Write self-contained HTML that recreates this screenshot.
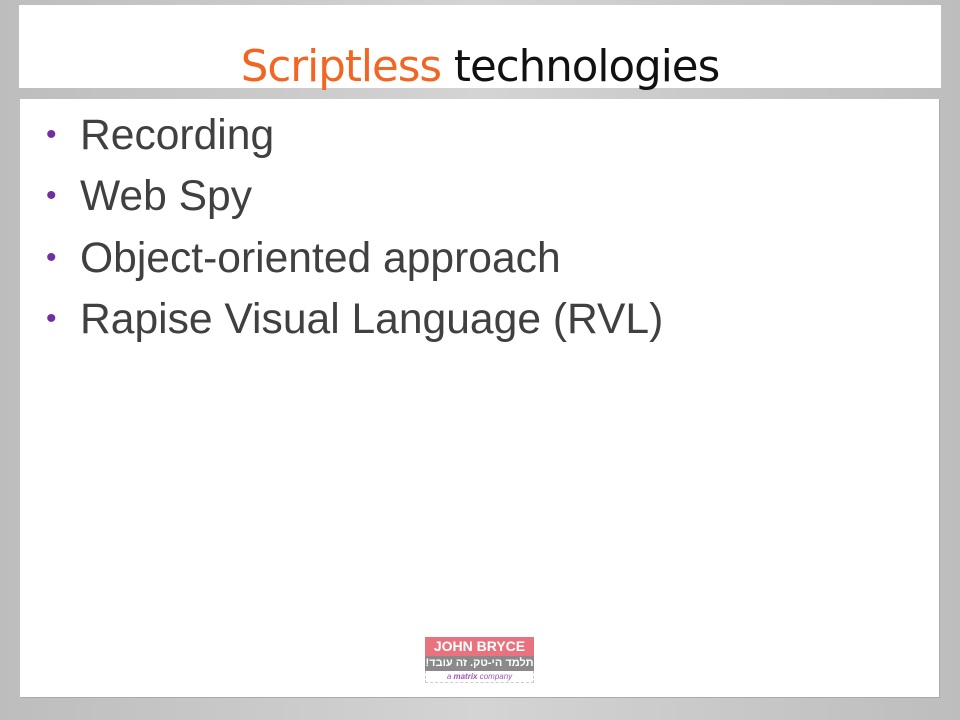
<!DOCTYPE html>
<html><head><meta charset="utf-8"><style>
body{margin:0;width:960px;height:720px;overflow:hidden;background:linear-gradient(90deg,#bdbdbd,#d4d4d4 50%,#bdbdbd);position:relative;font-family:"Liberation Sans",sans-serif}
.t{position:absolute;left:19px;top:5px;width:922px;height:83px;background:#fff}
.t div{position:absolute;left:0;right:0;top:37px;text-align:center;font-size:43.5px;line-height:50px;color:#111;font-family:"DejaVu Sans","Liberation Sans",sans-serif;letter-spacing:-1px}
.b{position:absolute;left:20px;top:99px;width:919px;height:598px;background:#fff;box-shadow:1px 1px 0 #aaa}
.l{position:absolute;left:60px;font-size:42.6px;color:#404040;line-height:46px}
.d{position:absolute;left:26px;color:#7030a0;font-size:30px;line-height:46px}
.logo{position:absolute;left:425px;top:637px;width:109px}
</style></head><body>
<div class="t"><div><span style="color:#f26522">Scriptless</span> technologies</div></div>
<div class="b">
<span class="d" style="top:13px">•</span><span class="l" style="top:13px">Recording</span>
<span class="d" style="top:74px">•</span><span class="l" style="top:74px">Web Spy</span>
<span class="d" style="top:136px">•</span><span class="l" style="top:136px">Object-oriented approach</span>
<span class="d" style="top:197px">•</span><span class="l" style="top:197px">Rapise Visual Language (RVL)</span>
</div>
<div class="logo">
<div style="background:#e8737f;color:#fff;font-weight:bold;font-size:14px;height:19px;line-height:19px;text-align:center">JOHN BRYCE</div>
<div style="background:#8a8a8a;color:#fff;font-weight:bold;font-size:11px;height:15px;line-height:15px;text-align:center;font-family:'Liberation Sans','DejaVu Sans',sans-serif" dir="rtl">תלמד הי-טק. זה עובד!</div>
<div style="border:1px dashed #ccc;border-top:none;color:#9b59b6;font-size:8px;height:11px;line-height:11px;text-align:center;font-style:italic">a <b>matrix</b> company</div>
</div>
</body></html>
